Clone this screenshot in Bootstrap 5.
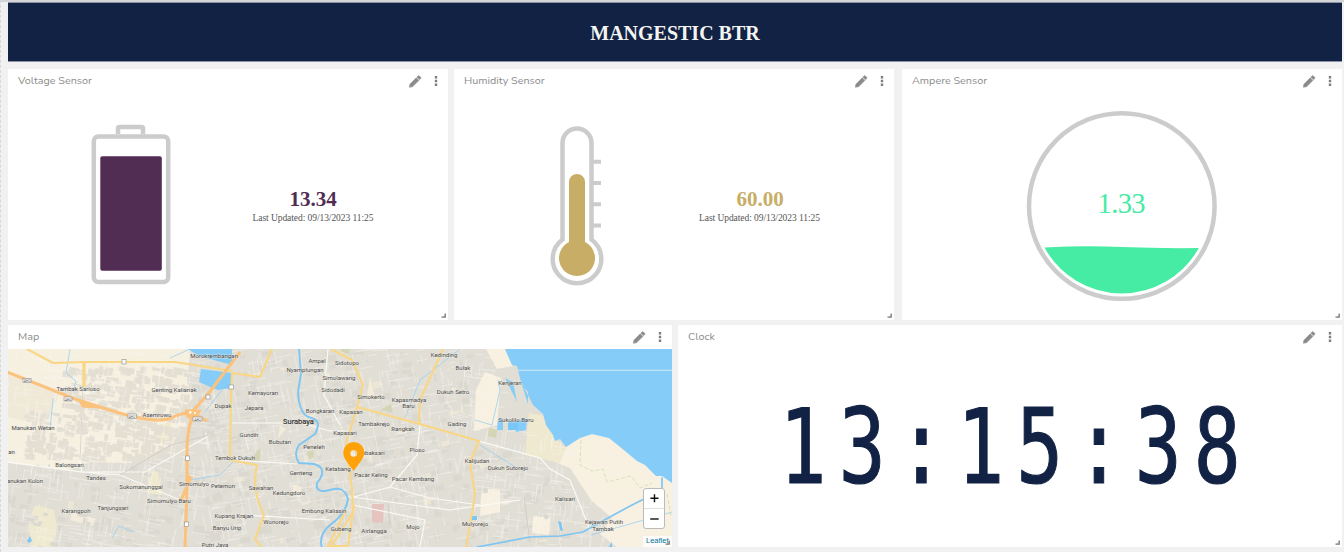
<!DOCTYPE html>
<html lang="en">
<head>
<meta charset="utf-8">
<meta name="viewport" content="width=device-width, initial-scale=1">
<title>Mangestic BTR</title>
<link href="https://cdn.jsdelivr.net/npm/bootstrap@5.3.0/dist/css/bootstrap.min.css" rel="stylesheet">
<style>
body{background:#f1f1f1;height:552px;overflow:hidden;font-family:"Liberation Serif",serif}
.board{height:552px;padding:0 2px 5px 7px;border-left:1px dashed #d8d8d8;border-top:2px solid #d3d4d6}
.hero{height:60px;background:#122244;border:1px solid #8b93a5;border-left:0;border-right:0;margin-bottom:7px}
.hero h1{font-size:20px;font-weight:700;color:#f4f5f2;padding-top:1px}
.sensors{grid-template-columns:446px 448px 440px;height:251px;margin-bottom:5px}
.lower{grid-template-columns:664px 664px;gap:6px;height:222px}
.widget{background:#fff;border:0;border-radius:0;height:100%;min-width:0}
.sensors .widget{width:440px}
.bar{height:24px;padding:0 7px 0 10px}
.bar span{font:400 10.8px/23px Nunito,Lato,sans-serif;color:#8c8c8c}
.tools{margin-top:6px}
.plot{height:227px}
.fill{width:100%;height:100%;display:block}
.corner{right:2px;bottom:2px;width:5px;height:5px}
.map-area{height:198px}
.streets text{font-family:Roboto,sans-serif}
.digits{font-family:"DejaVu Sans Mono",monospace;font-size:104px;letter-spacing:16.3px}
.zooms{right:7px;top:139px;width:22px;height:41px;border:1px solid #bbb;border-radius:3px}
.zooms div{height:20px}
.attrib{right:0;bottom:0;width:29px;height:11px;background:rgba(255,255,255,.8);color:#0078a8;font:7.5px/10px "Liberation Sans",sans-serif;padding-left:3px}
</style>
<script src="https://cdn.jsdelivr.net/npm/bootstrap@5.3.0/dist/js/bootstrap.bundle.min.js"></script>
</head>
<body>
<svg width="0" height="0" class="position-absolute">
  <symbol id="tools" viewBox="0 0 32 14">
    <path fill="#8b8b8b" stroke="#8b8b8b" stroke-width=".5" d="M.3 12.300 .9 9.200 7.200 2.800 9.900 5.500 3.500 11.800ZM7.800 2.200 9.100.9Q9.700.3 10.400.9L11.700 2.200Q12.200 2.800 11.700 3.400L10.500 4.800Z"/>
    <path fill="#7d7d7d" d="M25.800 1h2.400v2.400h-2.400zM25.800 4.800h2.400v2.400h-2.400zM25.800 8.600h2.400v2.400h-2.400z"/>
  </symbol>
  <symbol id="grip" viewBox="0 0 5 5"><path d="M4.200 .5V4.200H.5" fill="none" stroke="#777" stroke-width="1.300"/><path d="M3.500 2v1.500H2z" fill="#999"/></symbol>
</svg>

<main class="board">
  <header class="hero d-flex align-items-center justify-content-center"><h1 class="m-0">MANGESTIC BTR</h1></header>

  <section class="sensors d-grid">
    <article class="widget card">
      <div class="bar d-flex justify-content-between"><span>Voltage Sensor</span><svg width="32" height="14" class="tools"><use href="#tools"/></svg></div>
      <div class="plot"><svg class="fill" viewBox="8 93 440 227">
        <g fill="none" stroke="#ccc" stroke-width="4.500"><path d="M118 134v-5.500q0-1.500 1.500-1.500h22q1.500 0 1.500 1.500V134"/><rect x="93.800" y="136.500" width="74.400" height="145.500" rx="4.500"/></g>
        <rect x="100.300" y="156.300" width="61.500" height="114.500" rx="2" fill="#512c53"/>
        <text x="313" y="206" text-anchor="middle" font-size="21" font-weight="700" fill="#512c53">13.34</text>
        <text x="313" y="221" text-anchor="middle" font-size="9.500" fill="#555" textLength="121">Last Updated: 09/13/2023 11:25</text>
      </svg></div>
      <svg class="corner position-absolute"><use href="#grip"/></svg>
    </article>
    <article class="widget card">
      <div class="bar d-flex justify-content-between"><span>Humidity Sensor</span><svg width="32" height="14" class="tools"><use href="#tools"/></svg></div>
      <div class="plot"><svg class="fill" viewBox="454 93 440 227">
        <g fill="none" stroke="#ccc" stroke-width="4.500"><path d="M562.500 239.500V143a14.500 14.500 0 0 1 29 0V239.500A24.300 24.300 0 1 1 562.500 239.500Z"/><path stroke-width="4" d="M592 161.800h9M592 183h9M592 204.200h9M592 225.400h9"/></g>
        <path d="M569 242V182a8 8 0 0 1 16 0V242A18 18 0 1 1 569 242Z" fill="#c7ad65"/>
        <text x="760" y="206" text-anchor="middle" font-size="21" font-weight="700" fill="#c7ad65">60.00</text>
        <text x="759.500" y="221" text-anchor="middle" font-size="9.500" fill="#555" textLength="121">Last Updated: 09/13/2023 11:25</text>
      </svg></div>
      <svg class="corner position-absolute"><use href="#grip"/></svg>
    </article>
    <article class="widget card">
      <div class="bar d-flex justify-content-between"><span>Ampere Sensor</span><svg width="32" height="14" class="tools"><use href="#tools"/></svg></div>
      <div class="plot"><svg class="fill" viewBox="902 93 440 227">
        <circle cx="1121.800" cy="206" r="92.800" fill="none" stroke="#ccc" stroke-width="4.500"/>
        <path d="M1044.500 247.500Q1084 245.500 1122 247T1198.800 248A88 88 0 0 1 1044.500 247.500Z" fill="#46eba4"/>
        <text x="1121.500" y="213" text-anchor="middle" font-size="28.500" fill="#46eba4" textLength="48">1.33</text>
      </svg></div>
      <svg class="corner position-absolute"><use href="#grip"/></svg>
    </article>
  </section>

  <section class="lower d-grid">
    <article class="widget card">
      <div class="bar d-flex justify-content-between"><span>Map</span><svg width="32" height="14" class="tools"><use href="#tools"/></svg></div>
      <div class="map-area streets position-relative">
        <svg class="fill" viewBox="8 349 664 198" preserveAspectRatio="none">
          <rect x="7" y="349" width="665" height="199" fill="#e1ded6"/>
          <g>
            <path fill="#f6f0e1" d="M7 349H190L187 382 193 398 180 412 187 425 171 445 130 463 90 462 70 470 7 463Z"/>
            <path fill="#f0e9d8" d="M7 373 60 393 45 425 7 417Z"/>
            <path fill="#f8f1e2" d="M485 372 501 378 497 425 474 431 476 390ZM486 349H505L513 366 497 369ZM530 455 566 447 580 438 592 434 609 438 672 480V548H618L600 534 612 518 591 500 570 468 550 460ZM482 488 500 490 500 512 480 516ZM533 516 550 518 549 535 532 533Z"/>
            <path fill="#efe9cf" d="M35 505 54 510 57 528 51 548H31L29 520ZM149 470 158 472 163 498 147 492ZM153 426 170 422 174 441 155 444ZM529 413 545 416 554 437 566 448 560 463 525 455Z"/>
            <path fill="#f3ecdd" d="M72 512 96 519 92 526 70 520Z"/>
          </g>
          <g id="blocks"></g>
          <g id="lanes" fill="none" stroke="#f8f7f2"></g>
          <path fill="#d3d5b5" d="M257 451 260 448 260 462 250 462ZM380 410 391 404 392 412ZM340 349H350L349 354 342 352ZM307 452l6-2 1 7-5 3zM489 428l8 2-1 8-8-2z"/>
          <path fill="#f3ecda" d="M370 376l5 22-8-3zM325 376l4-4 2 9zM280 425l6 4-8 10zM293 484l9 3-2 10-7-3z"/>
          <path fill="#e5c3bf" d="M372 504h12l-1 19-11-1z"/>
          <path fill="#85ccf8" d="M505 349 512 365 517 366 521 382 529 397 533 405 543 414 546 425 553 435 555 441 560 439 566 447 580 438 592 434 609 438 625 451 637 461 645 465 656 476 662 476 672 483V349ZM188 349 199 356 232 365V349ZM201 369 232 373 231 388 218 390 210 387 199 382ZM505 378 513 382 517 402ZM522 385 528 392 528 404ZM513 421 527 419 526 430 516 432ZM498 419h5v11h-6z"/>
          <path stroke="#f2f5f5" stroke-width=".7" d="M518 370.300H672"/>
          <g fill="none" stroke="#fafaf5" stroke-width="1.200">
            <path d="M83 387 80 462 82 472 7 462M82 472 145 472 210 435M82 472 120 475 180 500M232 423H300L330 431H350M232 460 297 464M328 349 324 395 340 425M420 425 417 455 390 487 350 498M390 487 430 498 480 505M479 441 540 458 550 469 570 480 590 530M245 515 330 520M352 497 450 510 520 500M353 505 425 520 420 547"/>
          </g>
          <path stroke="#cac6c0" stroke-width=".7" fill="none" d="M83 387 80 460M120 475 171 445 210 435M524 497l6 45M388 505l2 20"/>
          <g fill="none" stroke="#8dcdf3" stroke-width=".7">
            <path d="M70 349 66 373 76 381 74 389M190 349 170 358M53 398 50 430M233 462 220 475 190 480M405 418 420 380 460 349M475 420 492 425 500 390 498 380M205 412 222 390M480 445 520 470M591 535 672 512M112 538l7-12 15 6"/>
          </g>
          <path fill="none" stroke="#cddcae" stroke-width=".8" stroke-dasharray="4 2" d="M581 440 580 465 592 471 603 469 607 482 631 476 640 488 652 483M667 494 671 516"/>
          <g fill="none" stroke="#7dc6f3" stroke-width="1.900" stroke-linejoin="round" stroke-linecap="round">
            <path d="M299 349 301 374 298 392Q299 412 308 417C319 419 320 424 315 434L299 445Q293 454 299 463L314 464C326 467 323 476 317 483Q315 494 330 490 344 485 348 499 346 514 330 525 318 535 322 548"/>
            <path stroke-width="1.700" d="M477 547 530 537 560 536 583 532 608 518 632 505 662 490V478"/>
          </g>
          <path fill="#79c7f6" d="M27 541 30 536 32 541 29 543ZM472 516h5v4h-5zM508 421h10v9h-10zM558 521l3 1 2 9-3-1zM608 548l4-6 0 6z"/>
          <g fill="none" stroke="#f9d684" stroke-width="2.100" stroke-linejoin="round">
            <path d="M27 349 53 363 83 362H175L232 371M232 373 231 395 230 460 257 465Q251 490 264 515L255 539 262 548M232 373 260 377 272 349M331 349 352 360 363 385 357 407 346 443 352 490 353 512 340 533 330 548M357 407 420 424 479 441 470 462 475 495 466 548M443 349 420 400 419 424M346 510 328 546H348L354 505"/>
            <path d="M84 362V387" stroke-width="3.200"/>
          </g>
          <g fill="none" stroke="#fbc27d" stroke-width="3.100" stroke-linejoin="round">
            <path d="M7 372 75 399 103 408Q155 425 171 418 180 413 191 413L208 394 240 352M191 413 207 421M193 415Q187 430 187 450V490L185 548M190 480 181 500"/>
            <path fill="#fbc27d" d="M185 410H201L195 421 187 417ZM188 475l5 3-5 3ZM80 402l20 6-18-1z" stroke-width="1"/>
          </g>
          <path fill="#fbf5e6" d="M189 411h2.500v2.500H189zM194 412h2v2h-2z"/>
          <g fill="#fff" stroke="#8d8d8d" stroke-width=".6">
            <rect x="23" y="378.500" width="8" height="4"/><rect x="64" y="397" width="8" height="4"/><rect x="128" y="414" width="8.500" height="4.500"/><rect x="193" y="417" width="9" height="4"/><rect x="122" y="359.500" width="4" height="4.500"/><rect x="206" y="395" width="4" height="4"/><rect x="185.500" y="456" width="4" height="4.500"/><rect x="184.500" y="522" width="4" height="4.500"/><rect x="229" y="385" width="4.500" height="4"/>
          </g>
          <g font-size="3.500" text-anchor="middle" fill="#555"><text x="27" y="382">AH2</text><text x="68" y="400.500">AH2</text><text x="132" y="418">AH2</text><text x="197.500" y="420.500">AH2</text></g>
          <g id="labels" font-size="6" fill="#4c4c4c" stroke="#efede6" stroke-width=".9" stroke-opacity=".7" paint-order="stroke" text-anchor="middle"></g>
          <text x="298.500" y="423.500" font-size="7.500" fill="#333" stroke="#333" stroke-width=".15" text-anchor="middle">Surabaya</text>
          <path fill="#ffa20a" d="M353.700 471 345.500 460Q343 456 343.300 452A10.500 10 0 0 1 364.300 452Q364.300 456 362 459.500Z"/>
          <circle cx="353.700" cy="453.500" r="3.300" fill="#f2eddf"/><path d="M353.500 451.500h3v4h-1v-3h-2z" fill="#cfcabd"/>
        </svg>
        <div class="zooms bg-white position-absolute"><div class="border-bottom"><svg class="fill" viewBox="0 0 20 20"><path d="M10.500 5.500v8.500M6.200 9.800h8.500" stroke="#111" stroke-width="1.500"/></svg></div><div><svg class="fill" viewBox="0 0 20 20"><path d="M6.200 10h8.500" stroke="#111" stroke-width="1.400"/></svg></div></div>
        <div class="attrib position-absolute">Leaflet</div>
      </div>
      <svg class="corner position-absolute"><use href="#grip"/></svg>
    </article>
    <article class="widget card">
      <div class="bar d-flex justify-content-between"><span>Clock</span><svg width="32" height="14" class="tools"><use href="#tools"/></svg></div>
      <div class="map-area"><svg class="fill" viewBox="678 349 664 198">
        <text class="digits" transform="translate(779.600 482.500) scale(.75 1)" fill="#122244" stroke="#122244" stroke-width="1.200">13:15:38</text>
      </svg></div>
      <svg class="corner position-absolute"><use href="#grip"/></svg>
    </article>
  </section>
</main>
<script>
// Place names: text, centre x, baseline y
const places = [["Morokrembangan",214,357.500],["Tambak Sarioso",78,390.500],["Genting Kalianak",174,391.500],["Asemrowo",157,416.500],["Manukan Wetan",33,430],["an",11.500,454],["Balongsari",69.500,466.500],["anukan Kulon",25,482.500],["Tandes",96,479.500],["Sukomanunggal",141,489],["Karangpoh",76,512.500],["Tanjungsari",113,510],["Simomulyo",194,485.500],["Simomulyo Baru",169,503],["Dupak",223,408],["Kemayoran",263,395],["Jepara",254,410],["Gundih",249,436.500],["Bubutan",280,444],["Tembok Dukuh",235,459.500],["Peneleh",314,448.500],["Genteng",301,475],["Petemon",223,487.500],["Sawahan",261,489.500],["Kedungdoro",289,495],["Kupang Krajan",234,517.500],["Banyu Urip",227,529.500],["Putri Jaya",215,546.500],["Wonorejo",276,523.500],["Embong Kaliasin",324,512.500],["Gubeng",341,531],["Airlangga",374,532.500],["Mojo",413,529],["Ampel",317,363],["Nyamplungan",305,371.500],["Sidotopo",347,364.500],["Simolawang",339,379.500],["Sidodadi",333,392],["Simokerto",371,399],["Kapasmadya",409,402],["Baru",408.500,408],["Bongkaran",320,413],["Kapasan",351,414],["Kapasari",345,434.500],["Tambakrejo",374,426],["Rangkah",403,430.500],["Ploso",417,452],["Tambaksari",369,455],["Ketabang",338,470.500],["Pacar Keling",371,477],["Pacar Kembang",413,481],["Kedinding",444,356.500],["Bulak",463,370],["Dukuh Setro",453,394],["Gading",457,426],["Kenjeran",510,384.500],["Sukolilo Baru",516,421.500],["Kalijudan",477,463],["Dukuh Sutorejo",508,470],["Kalisari",565,500.500],["Mulyorejo",475,525.500],["Kejawan Putih",604,524],["Tambak",603,530.500]];
const ns = "http://www.w3.org/2000/svg";
const add = (id, tag, attrs, text) => {
  const el = document.createElementNS(ns, tag);
  for (const k in attrs) el.setAttribute(k, attrs[k]);
  if (text) el.textContent = text;
  document.getElementById(id).append(el);
};
places.forEach(([name, x, y]) => add("labels", "text", {x, y}, name));

// Repeatable minor streets and building blocks
let seed = 7;
const rnd = () => (seed = seed * 16807 % 2147483647) / 2147483647;
for (let i = 0; i < 420; i++) {
  const x = 25 + rnd() * 160, y = 366 + rnd() * 90;
  if (x < 60 && y < 410) continue;
  add("blocks", "rect", {x, y, width: 3 + rnd() * 8, height: 2 + rnd() * 6, fill: "#e4dfd3", transform: `rotate(9 ${x} ${y})`});
}
for (let i = 0; i < 600; i++) {
  const x = 7 + rnd() * 555, y = 351 + rnd() * 195;
  if ((x > 470 && y < 450) || (x < 190 && y < 460)) continue;
  add("blocks", "rect", {x, y, width: 2 + rnd() * 9, height: 2 + rnd() * 6, fill: rnd() < .07 ? "#ece6d6" : "#dbd8d0", transform: `rotate(${x < 200 ? 9 : -10} ${x} ${y})`});
}
let d = "";
for (let i = 0; i < 1500; i++) {
  const x = 7 + rnd() * 600, y = 350 + rnd() * 196;
  if ((x > 500 && y < 430) || (x > 565 && y < 495)) continue;
  const a = (x < 200 ? .16 : x > 460 ? .12 : -.2) + (rnd() < .5 ? Math.PI / 2 : 0), l = 4 + rnd() * 15;
  d += `M${x.toFixed(1)} ${y.toFixed(1)}l${(l * Math.cos(a)).toFixed(1)} ${(l * Math.sin(a)).toFixed(1)}`;
}
add("lanes", "path", {d, "stroke-width": .45});
</script>
</body>
</html>
